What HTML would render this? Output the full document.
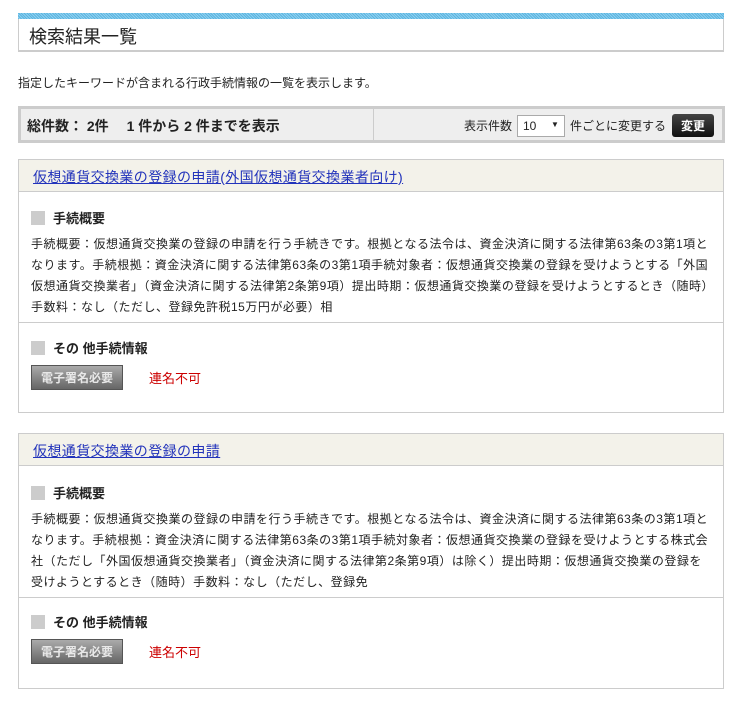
<!DOCTYPE html>
<html><head><meta charset="utf-8"><style>
*{margin:0;padding:0;box-sizing:border-box}
body{width:743px;height:701px;background:#fff;font-family:"Liberation Sans","Noto Sans CJK JP",sans-serif;font-size:12px;color:#222;position:relative;overflow:hidden}
.abs{position:absolute}
.bar{left:18px;top:13px;width:706px;height:6px;background:repeating-linear-gradient(45deg,#5ab4e0 0 1px,#8fd0ef 1px 2px)}
.title{left:18px;top:19px;width:706px;height:33px;border:1px solid #ccc;border-top:none;border-bottom:2px solid #ccc;font-size:18px;padding:4px 0 0 10px;color:#222}
.lead{left:18px;top:74px;font-size:12px}
.sum{left:18px;top:106px;width:707px;height:37px;background:#eee;border:3px solid #ccc}
.sum .l{position:absolute;left:6px;top:7px;font-weight:bold;font-size:14px}
.sum .div{position:absolute;left:352px;top:0;width:1px;height:31px;background:#ccc}
.sum .r{position:absolute;right:8px;top:5px;display:flex;align-items:center;font-size:12px}
.sel{width:48px;height:22px;border:1px solid #aaa;background:#fff;margin:0 5px;font-size:12px;padding:3px 0 0 5px;position:relative}
.sel:after{content:"▼";position:absolute;right:5px;top:4px;font-size:8px}
.btn{background:linear-gradient(#444,#111);color:#fff;font-weight:bold;border-radius:3px;padding:3px 9px;margin-left:6px;font-size:12px}
.card{left:18px;width:706px;border:1px solid #ccc}
.hd{height:32px;background:#f3f2ea;border-bottom:1px solid #ccc;padding:7px 0 0 14px;font-size:14px;letter-spacing:0.4px}
.hd a{color:#2233bb;text-decoration:underline}
.h{font-weight:bold;font-size:13px;display:flex;align-items:center;margin-left:12px}
.h:before{content:"";width:14px;height:14px;background:#ccc;margin-right:8px}
.p{padding:0 12px;line-height:21px;font-size:12px;letter-spacing:0.5px}
.sep{border-top:1px solid #ccc}
.badge{display:inline-block;background:linear-gradient(#aaa,#666);color:#e8e8e8;font-weight:bold;border:1px solid #555;padding:3px 6px;font-size:12px;width:92px;text-align:center}
.red{color:#c00;margin-left:26px;font-size:13px}
</style></head><body>
<div class="abs bar"></div>
<div class="abs title">検索結果一覧</div>
<div class="abs lead">指定したキーワードが含まれる行政手続情報の一覧を表示します。</div>
<div class="abs sum"><div class="l">総件数： 2件　 1 件から 2 件までを表示</div><div class="div"></div>
<div class="r">表示件数<div class="sel">10</div>件ごとに変更する<span class="btn">変更</span></div></div>

<div class="abs card" style="top:159px;height:254px">
<div class="hd"><a>仮想通貨交換業の登録の申請(外国仮想通貨交換業者向け)</a></div>
<div class="h" style="margin-top:16px">手続概要</div>
<div class="p" style="margin-top:7px">手続概要：仮想通貨交換業の登録の申請を行う手続きです。根拠となる法令は、資金決済に関する法律第63条の3第1項となります。手続根拠：資金決済に関する法律第63条の3第1項手続対象者：仮想通貨交換業の登録を受けようとする「外国仮想通貨交換業者」（資金決済に関する法律第2条第9項）提出時期：仮想通貨交換業の登録を受けようとするとき（随時）手数料：なし（ただし、登録免許税15万円が必要）相</div>
<div class="sep" style="margin-top:4px"></div>
<div class="h" style="margin-top:15px">その 他手続情報</div>
<div style="margin:8px 12px 0;display:flex;align-items:center"><span class="badge">電子署名必要</span><span class="red">連名不可</span></div>
</div>

<div class="abs card" style="top:433px;height:256px">
<div class="hd"><a>仮想通貨交換業の登録の申請</a></div>
<div class="h" style="margin-top:17px">手続概要</div>
<div class="p" style="margin-top:7px">手続概要：仮想通貨交換業の登録の申請を行う手続きです。根拠となる法令は、資金決済に関する法律第63条の3第1項となります。手続根拠：資金決済に関する法律第63条の3第1項手続対象者：仮想通貨交換業の登録を受けようとする株式会社（ただし「外国仮想通貨交換業者」（資金決済に関する法律第2条第9項）は除く）提出時期：仮想通貨交換業の登録を受けようとするとき（随時）手数料：なし（ただし、登録免</div>
<div class="sep" style="margin-top:4px"></div>
<div class="h" style="margin-top:14px">その 他手続情報</div>
<div style="margin:8px 12px 0;display:flex;align-items:center"><span class="badge">電子署名必要</span><span class="red">連名不可</span></div>
</div>
</body></html>
